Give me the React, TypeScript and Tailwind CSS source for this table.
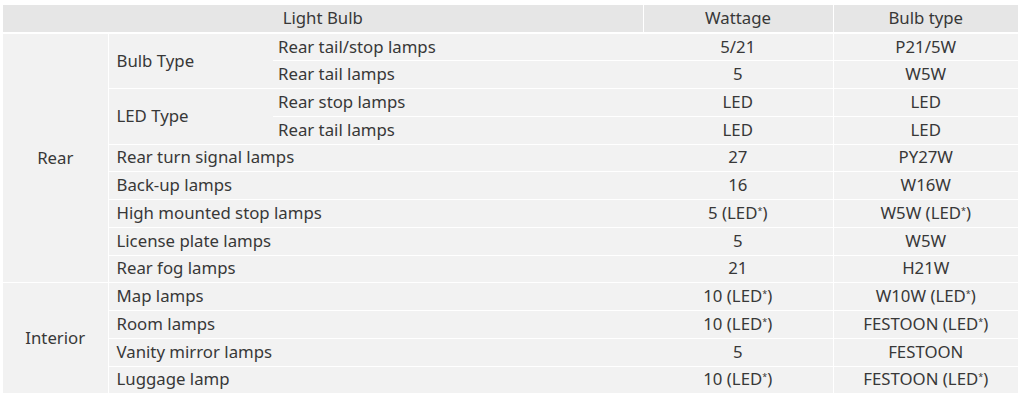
import React from "react";

const Star = () => <sup className="text-[9px] relative -top-[5px]">*</sup>;

type Row = { c1?: { t: string; rs: number }; c2?: { t: string; rs: number; cs?: number }; c3?: string; w: React.ReactNode; b: React.ReactNode };

const led10 = (
  <>
    10 (LED<Star />)
  </>
);

const rows: Row[] = [
  { c1: { t: "Rear", rs: 9 }, c2: { t: "Bulb Type", rs: 2 }, c3: "Rear tail/stop lamps", w: "5/21", b: "P21/5W" },
  { c3: "Rear tail lamps", w: "5", b: "W5W" },
  { c2: { t: "LED Type", rs: 2 }, c3: "Rear stop lamps", w: "LED", b: "LED" },
  { c3: "Rear tail lamps", w: "LED", b: "LED" },
  { c2: { t: "Rear turn signal lamps", rs: 1, cs: 2 }, w: "27", b: "PY27W" },
  { c2: { t: "Back-up lamps", rs: 1, cs: 2 }, w: "16", b: "W16W" },
  { c2: { t: "High mounted stop lamps", rs: 1, cs: 2 }, w: <>5 (LED<Star />)</>, b: <>W5W (LED<Star />)</> },
  { c2: { t: "License plate lamps", rs: 1, cs: 2 }, w: "5", b: "W5W" },
  { c2: { t: "Rear fog lamps", rs: 1, cs: 2 }, w: "21", b: "H21W" },
  { c1: { t: "Interior", rs: 4 }, c2: { t: "Map lamps", rs: 1, cs: 2 }, w: led10, b: <>W10W (LED<Star />)</> },
  { c2: { t: "Room lamps", rs: 1, cs: 2 }, w: led10, b: <>FESTOON (LED<Star />)</> },
  { c2: { t: "Vanity mirror lamps", rs: 1, cs: 2 }, w: "5", b: "FESTOON" },
  { c2: { t: "Luggage lamp", rs: 1, cs: 2 }, w: led10, b: <>FESTOON (LED<Star />)</> },
];

export default function App() {
  return (
    <div className="w-[1023px] h-[401px] bg-white pt-[5px] pl-[3px]" style={{ fontFamily: '"Noto Sans", sans-serif' }}>
      <table className="table-fixed border-collapse w-[1015px] text-[16.8px] text-[#383838] leading-none">
        <colgroup>
          <col className="w-[105px]" />
          <col className="w-[165px]" />
          <col className="w-[370px]" />
          <col className="w-[190px]" />
          <col className="w-[185px]" />
        </colgroup>
        <thead>
          <tr className="h-[28px] bg-[#e6e6e6]">
            <th colSpan={3} className="font-normal text-center border-r border-b-2 border-white">Light Bulb</th>
            <th className="font-normal text-center border-r border-b-2 border-white">Wattage</th>
            <th className="font-normal text-center border-b-2 border-white">Bulb type</th>
          </tr>
        </thead>
        <tbody className="bg-[#f2f2f2]">
          {rows.map((r, i) => (
            <tr key={i} className="h-[27.75px]">
              {r.c1 && (
                <td rowSpan={r.c1.rs} className="text-center border-r border-b border-white">
                  {r.c1.t}
                </td>
              )}
              {r.c2 && (
                <td rowSpan={r.c2.rs} colSpan={r.c2.cs ?? 1} className="pl-[8px] text-left border-b border-white">
                  {r.c2.t}
                </td>
              )}
              {r.c3 && <td className="pl-[5px] text-left border-b border-white">{r.c3}</td>}
              <td className="text-center border-b border-r border-white">{r.w}</td>
              <td className="text-center border-b border-white">{r.b}</td>
            </tr>
          ))}
        </tbody>
      </table>
    </div>
  );
}
